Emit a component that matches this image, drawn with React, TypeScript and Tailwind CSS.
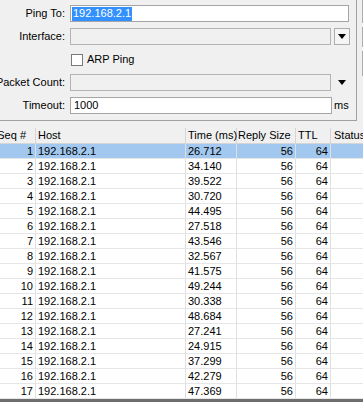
import React from "react";

const pings: [number, string][] = [
  [1, "26.712"],
  [2, "34.140"],
  [3, "39.522"],
  [4, "30.720"],
  [5, "44.495"],
  [6, "27.518"],
  [7, "43.546"],
  [8, "32.567"],
  [9, "41.575"],
  [10, "49.244"],
  [11, "30.338"],
  [12, "48.684"],
  [13, "27.241"],
  [14, "24.915"],
  [15, "37.299"],
  [16, "42.279"],
  [17, "47.369"],
];

function DownArrow() {
  return (
    <svg width="8" height="5" viewBox="0 0 8 5">
      <polygon points="0,0 8,0 4,5" fill="#000" />
    </svg>
  );
}

function Label({ text }: { text: string }) {
  return (
    <div className="flex w-[65px] shrink-0 justify-end whitespace-nowrap">
      {text}
    </div>
  );
}

export default function App() {
  return (
    <div className="h-[402px] w-[363px] overflow-hidden bg-[#f0f0f0] font-['Liberation_Sans',Arial,sans-serif] text-[11px] leading-none text-black">
      {/* form */}
      <div className="flex h-[121px]">
        <div className="flex h-[121px] w-[357px] shrink-0 flex-col gap-[6px] border-r border-b border-[#a0a0a0] pt-[5px]">
          <div className="flex h-[17px] items-center">
            <Label text="Ping To:" />
            <div className="ml-[5px] flex h-[17px] w-[279px] items-center border border-[#a5a5a5] bg-white pl-[1px]">
              <span className="flex h-[14px] items-center bg-[#3390ff] px-[1px] text-white">
                192.168.2.1
              </span>
            </div>
          </div>

          <div className="flex h-[17px] items-center">
            <Label text="Interface:" />
            <div className="ml-[5px] h-[17px] w-[261px] border border-[#b4b4b4] bg-[#f0f0f0]" />
            <div className="ml-[3px] flex h-[17px] w-[16px] items-center justify-center border border-[#adadad] bg-[#f5f5f5]">
              <DownArrow />
            </div>
          </div>

          <div className="flex h-[17px] items-center">
            <div className="ml-[71px] h-[12px] w-[12px] border border-[#7a7a7a] bg-white" />
            <span className="ml-[4px]">ARP Ping</span>
          </div>

          <div className="flex h-[17px] items-center">
            <Label text="Packet Count:" />
            <div className="ml-[5px] h-[17px] w-[261px] border border-[#b4b4b4] bg-[#f0f0f0]" />
            <div className="ml-[7px]">
              <DownArrow />
            </div>
          </div>

          <div className="flex h-[17px] items-center">
            <Label text="Timeout:" />
            <div className="ml-[5px] flex h-[17px] w-[262px] items-center border border-[#a5a5a5] bg-white pl-[3px]">
              1000
            </div>
            <span className="ml-[2px]">ms</span>
          </div>
        </div>

        <div className="flex flex-1 flex-col gap-[4px] pl-[5px]">
          <div className="h-[23px] border-l border-b border-[#adadad] bg-[#e5e5e5]" />
          <div className="h-[20px] border-l border-y border-[#adadad] bg-[#e5e5e5]" />
          <div className="h-[25px] border-l border-y border-[#adadad] bg-[#e5e5e5]" />
        </div>
      </div>

      {/* table */}
      <div className="mt-[7px] flex h-[16px] items-center border-b border-[#d5d5d5]">
        <div className="flex h-full w-[36px] shrink-0 items-center justify-end gap-[3px] whitespace-nowrap border-r border-[#d5d5d5] pr-[6px]">
          <span>Seq #</span>
          <svg width="4" height="5" viewBox="0 0 4 5">
            <polyline points="0.5,4.5 2,0.5 3.5,4.5" fill="none" stroke="#9a9a9a" strokeWidth="1" />
          </svg>
        </div>
        <div className="flex h-full w-[150px] shrink-0 items-center border-r border-[#d5d5d5] pl-[2px]">
          Host
        </div>
        <div className="flex h-full w-[51px] shrink-0 items-center whitespace-nowrap border-r border-[#d5d5d5] pl-[2px]">
          Time (ms)
        </div>
        <div className="flex h-full w-[59px] shrink-0 items-center whitespace-nowrap border-r border-[#d5d5d5] pl-[1px]">
          Reply Size
        </div>
        <div className="flex h-full w-[35px] shrink-0 items-center border-r border-[#d5d5d5] pl-[2px]">
          TTL
        </div>
        <div className="flex h-full flex-1 items-center pl-[3px]">Status</div>
      </div>

      <div className="bg-white">
        {pings.map(([seq, time]) => (
          <div
            key={seq}
            className={`flex h-[15px] items-center border-b border-[#e6e6e6] ${
              seq === 1 ? "bg-[#a3c8ef]" : "bg-white"
            }`}
          >
            <div className="flex h-full w-[36px] shrink-0 items-center justify-end border-r border-[#e0e0e0] pr-[2px]">
              {seq}
            </div>
            <div className="flex h-full w-[150px] shrink-0 items-center border-r border-[#e0e0e0] pl-[2px]">
              192.168.2.1
            </div>
            <div className="flex h-full w-[51px] shrink-0 items-center border-r border-[#e0e0e0] pl-[2px]">
              {time}
            </div>
            <div className="flex h-full w-[59px] shrink-0 items-center justify-end border-r border-[#e0e0e0] pr-[2px]">
              56
            </div>
            <div className="flex h-full w-[35px] shrink-0 items-center justify-end border-r border-[#e0e0e0] pr-[2px]">
              64
            </div>
            <div className="h-full flex-1" />
          </div>
        ))}
      </div>

      <div className="h-[4px] bg-[#6e6e6e]" />
    </div>
  );
}
